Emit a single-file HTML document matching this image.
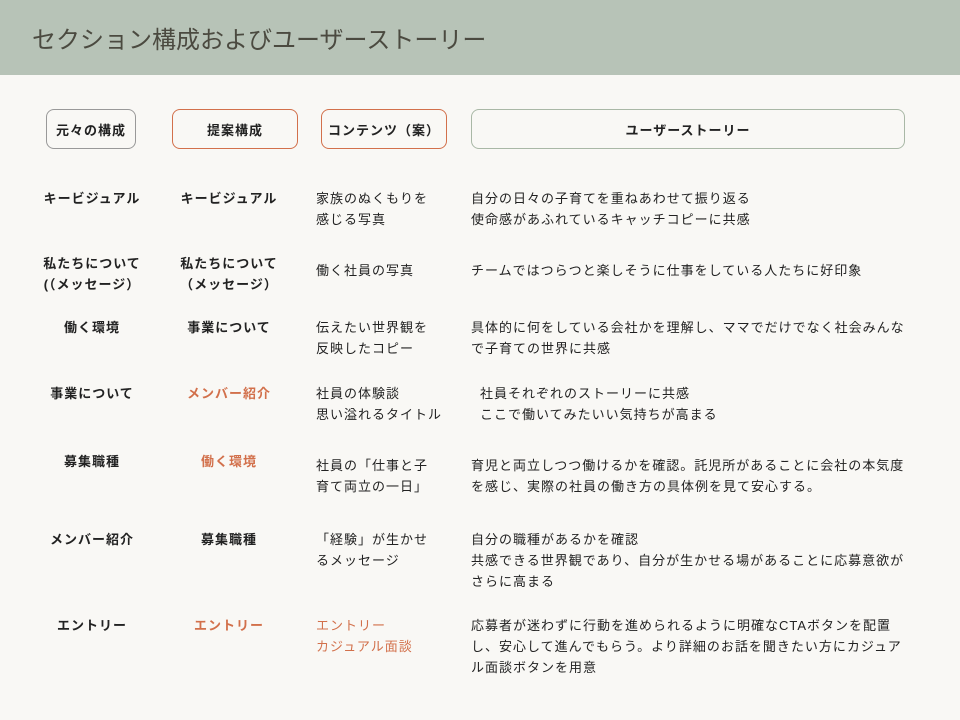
<!DOCTYPE html>
<html><head><meta charset="utf-8"><style>
body{margin:0;width:960px;height:720px;background:#f9f8f5;font-family:"Liberation Sans","Noto Sans CJK JP",sans-serif;color:#222;position:relative;overflow:hidden}
.hd{position:absolute;left:0;top:0;width:960px;height:75px;background:#b7c3b7}
.hd span{position:absolute;left:32px;top:20px;font-size:24px;color:#4b4a40}
.box{position:absolute;top:109px;height:40px;box-sizing:border-box;border:1px solid;border-radius:8px;font-size:13px;font-weight:bold;display:flex;align-items:center;justify-content:center;letter-spacing:1px}
.t{position:absolute;font-size:13px;line-height:21px;white-space:nowrap;letter-spacing:1px}
.c1,.c2{font-weight:bold;text-align:center;transform:translateX(-50%)}
.c1{left:92px}.c2{left:229px}.c3{left:316px}.c4{left:471px}
.o{color:#d2704b}
</style></head><body>
<div class="hd"><span>セクション構成およびユーザーストーリー</span></div>
<div class="box" style="left:46px;width:90px;border-color:#999">元々の構成</div>
<div class="box" style="left:172px;width:126px;border-color:#d2704b">提案構成</div>
<div class="box" style="left:321px;width:126px;border-color:#d2704b">コンテンツ（案）</div>
<div class="box" style="left:471px;width:434px;border-color:#a9b8a6">ユーザーストーリー</div>

<div class="t c1" style="top:188px">キービジュアル</div>
<div class="t c2" style="top:188px">キービジュアル</div>
<div class="t c3" style="top:188px">家族のぬくもりを<br>感じる写真</div>
<div class="t c4" style="top:188px">自分の日々の子育てを重ねあわせて振り返る<br>使命感があふれているキャッチコピーに共感</div>

<div class="t c1" style="top:253px">私たちについて<br>(（メッセージ）</div>
<div class="t c2" style="top:253px">私たちについて<br>（メッセージ）</div>
<div class="t c3" style="top:260px">働く社員の写真</div>
<div class="t c4" style="top:260px">チームではつらつと楽しそうに仕事をしている人たちに好印象</div>

<div class="t c1" style="top:317px">働く環境</div>
<div class="t c2" style="top:317px">事業について</div>
<div class="t c3" style="top:317px">伝えたい世界観を<br>反映したコピー</div>
<div class="t c4" style="top:317px">具体的に何をしている会社かを理解し、ママでだけでなく社会みんな<br>で子育ての世界に共感</div>

<div class="t c1" style="top:383px">事業について</div>
<div class="t c2 o" style="top:383px">メンバー紹介</div>
<div class="t c3" style="top:383px">社員の体験談<br>思い溢れるタイトル</div>
<div class="t c4" style="top:383px;left:480px">社員それぞれのストーリーに共感<br>ここで働いてみたいい気持ちが高まる</div>

<div class="t c1" style="top:451px">募集職種</div>
<div class="t c2 o" style="top:451px">働く環境</div>
<div class="t c3" style="top:455px">社員の「仕事と子<br>育て両立の一日」</div>
<div class="t c4" style="top:455px">育児と両立しつつ働けるかを確認。託児所があることに会社の本気度<br>を感じ、実際の社員の働き方の具体例を見て安心する。</div>

<div class="t c1" style="top:529px">メンバー紹介</div>
<div class="t c2" style="top:529px">募集職種</div>
<div class="t c3" style="top:529px">「経験」が生かせ<br>るメッセージ</div>
<div class="t c4" style="top:529px">自分の職種があるかを確認<br>共感できる世界観であり、自分が生かせる場があることに応募意欲が<br>さらに高まる</div>

<div class="t c1" style="top:615px">エントリー</div>
<div class="t c2 o" style="top:615px">エントリー</div>
<div class="t c3 o" style="top:615px">エントリー<br>カジュアル面談</div>
<div class="t c4" style="top:615px">応募者が迷わずに行動を進められるように明確なCTAボタンを配置<br>し、安心して進んでもらう。より詳細のお話を聞きたい方にカジュア<br>ル面談ボタンを用意</div>
</body></html>
